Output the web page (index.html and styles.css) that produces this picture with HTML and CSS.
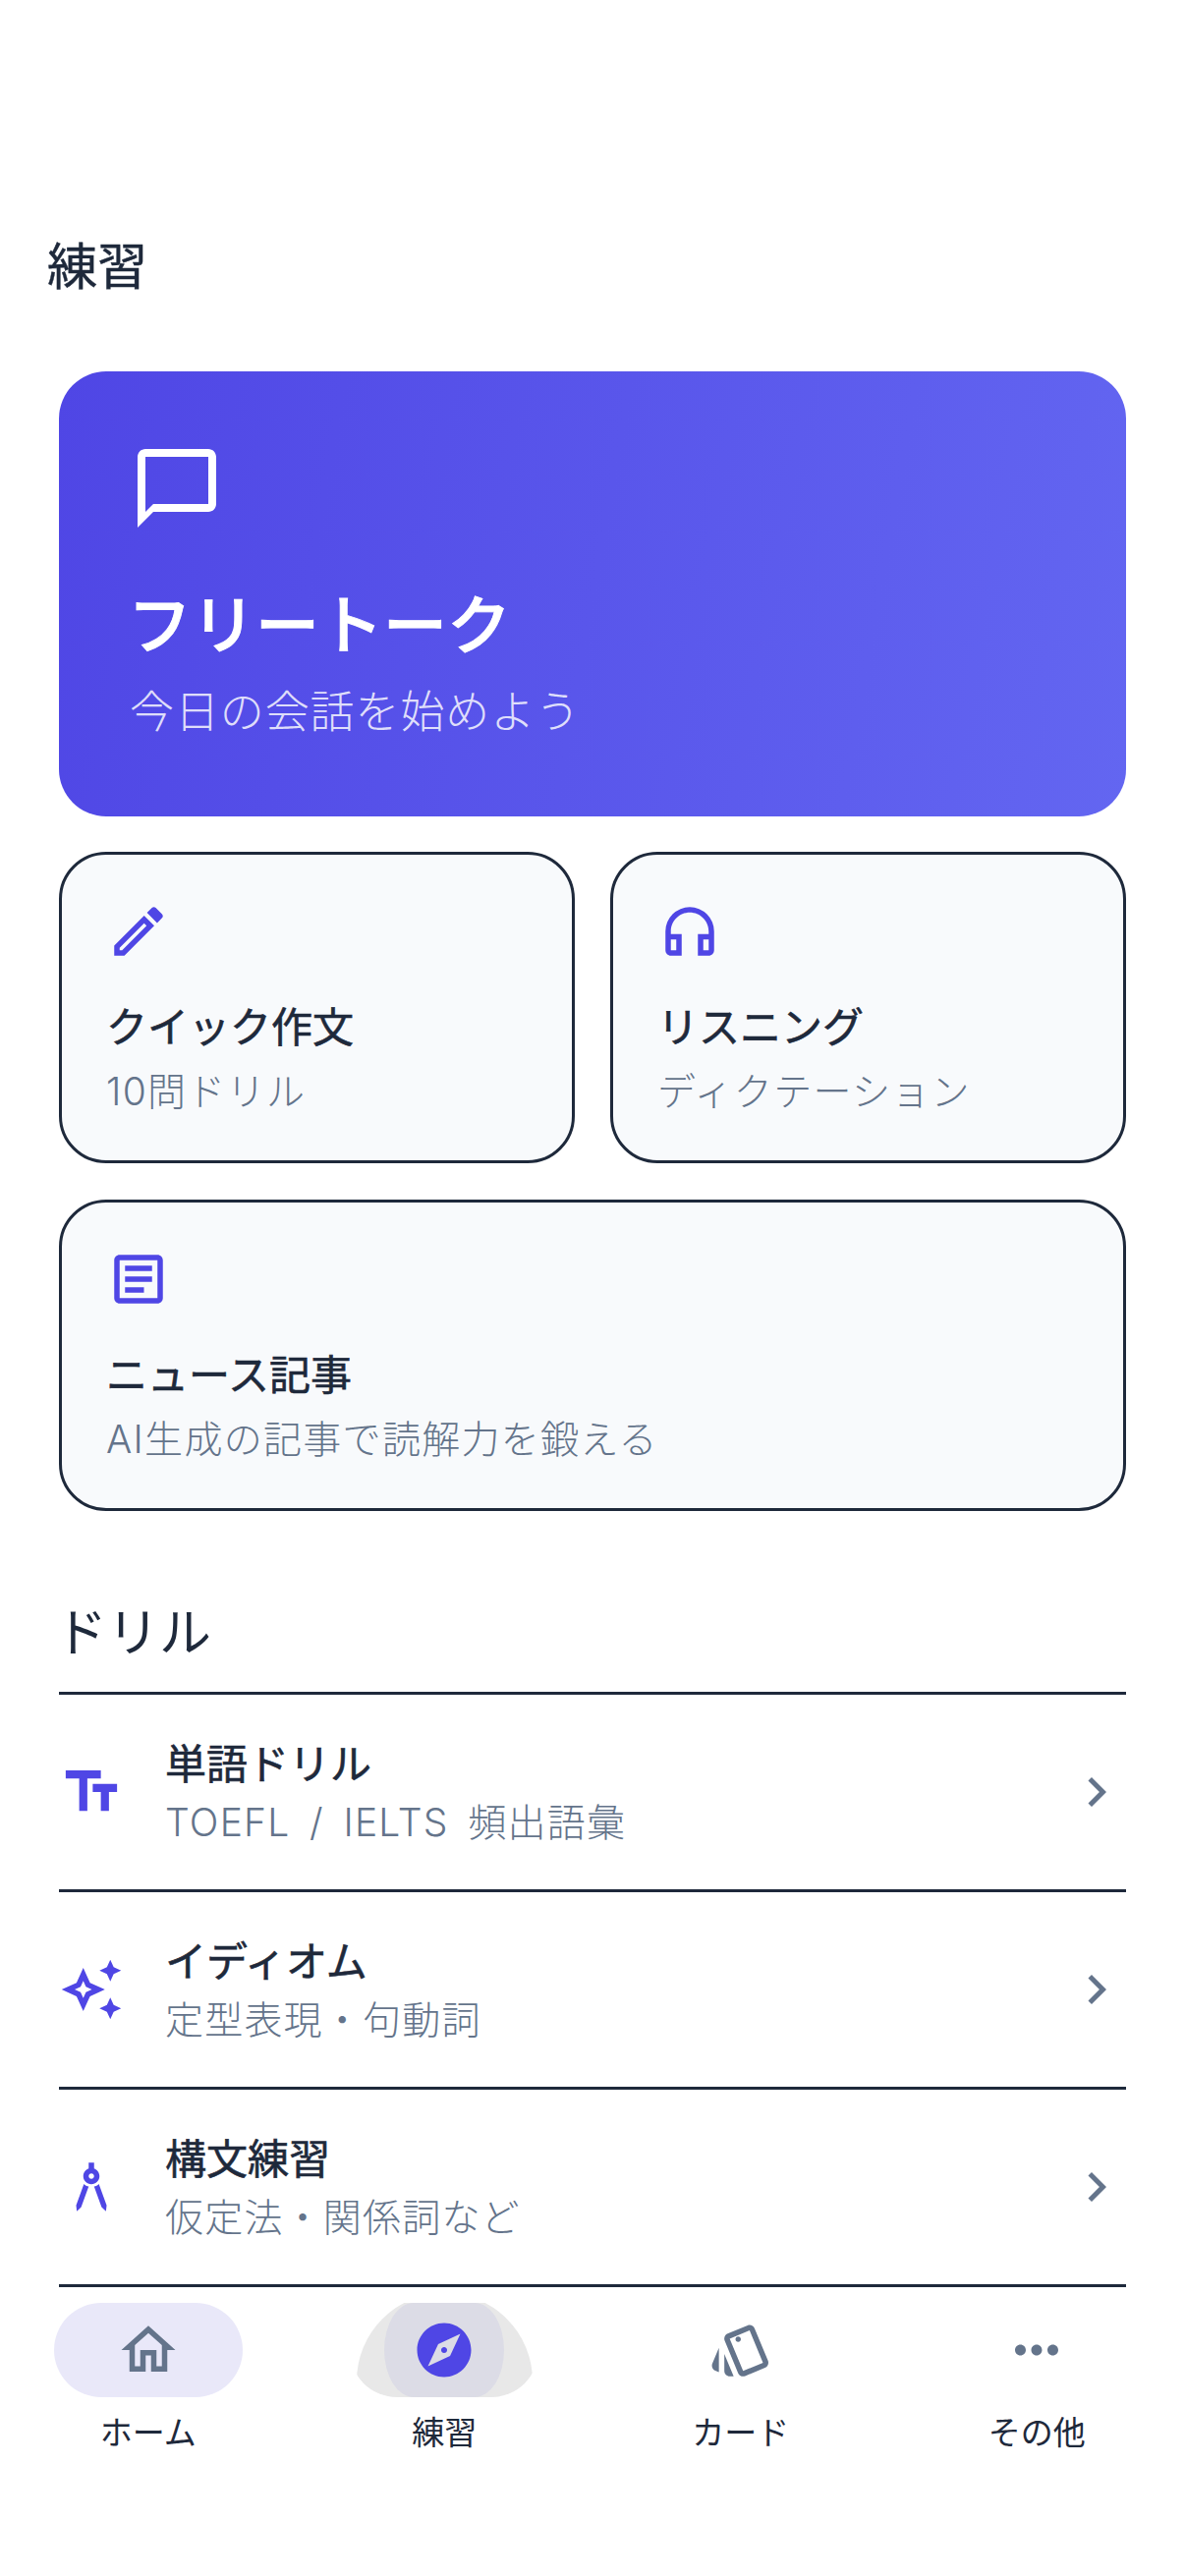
FILE: index.html
```html
<!DOCTYPE html>
<html lang="ja">
<head>
<meta charset="utf-8">
<title>練習</title>
<link rel="stylesheet" href="styles.css">
</head>
<body>
<div class="app">
  <header class="topbar"><h1 class="page-title">練習</h1></header>
  <main class="content">
    <section class="hero">
      <svg class="hero-icon" viewBox="0 0 24 24"><path d="M20 2H4c-1.1 0-2 .9-2 2v18l4-4h14c1.1 0 2-.9 2-2V4c0-1.1-.9-2-2-2zm0 14H6l-2 2V4h16v12z"/></svg>
      <h2 class="hero-title">フリートーク</h2>
      <p class="hero-sub">今日の会話を始めよう</p>
    </section>
    <div class="card-grid">
      <section class="card">
        <svg class="card-icon" viewBox="0 0 24 24"><path d="M14.06 9.02l.92.92L5.92 19H5v-.92l9.06-9.06M17.66 3c-.25 0-.51.1-.7.29l-1.83 1.83 3.75 3.75 1.83-1.83c.39-.39.39-1.02 0-1.41l-2.34-2.34c-.2-.2-.45-.29-.71-.29zm-3.6 3.19L3 17.25V21h3.75L17.81 9.94l-3.75-3.75z"/></svg>
        <h3 class="card-title">クイック作文</h3>
        <p class="card-sub">10問ドリル</p>
      </section>
      <section class="card">
        <svg class="card-icon" viewBox="0 0 24 24"><path d="M12 3a9 9 0 0 0-9 9v7c0 1.1.9 2 2 2h4v-8H5v-1c0-3.87 3.13-7 7-7s7 3.13 7 7v1h-4v8h4c1.1 0 2-.9 2-2v-7a9 9 0 0 0-9-9zM7 15v4H5v-4h2zm12 4h-2v-4h2v4z"/></svg>
        <h3 class="card-title">リスニング</h3>
        <p class="card-sub">ディクテーション</p>
      </section>
      <section class="card card-wide">
        <svg class="card-icon" viewBox="0 0 24 24"><path d="M19 5v14H5V5h14m0-2H5c-1.1 0-2 .9-2 2v14c0 1.1.9 2 2 2h14c1.1 0 2-.9 2-2V5c0-1.1-.9-2-2-2zM14 17H7v-2h7v2zm3-4H7v-2h10v2zm0-4H7V7h10v2z"/></svg>
        <h3 class="card-title">ニュース記事</h3>
        <p class="card-sub">AI生成の記事で読解力を鍛える</p>
      </section>
    </div>
    <h2 class="section-title">ドリル</h2>
    <ul class="drill-list">
      <li class="drill-row">
        <svg class="row-icon" viewBox="0 0 24 24"><path d="M2.5 4v3h5v12h3V7h5V4h-13zm19 5h-9v3h3v7h3v-7h3V9z"/></svg>
        <div class="row-text"><div class="row-title">単語ドリル</div><div class="row-sub">TOEFL / IELTS 頻出語彙</div></div>
        <svg class="chevron" viewBox="0 0 24 24"><path d="M10 6L8.59 7.41 13.17 12l-4.58 4.59L10 18l6-6z"/></svg>
      </li>
      <li class="drill-row">
        <svg class="row-icon" viewBox="0 0 24 24"><path d="M19 9l1.25-2.75L23 5l-2.75-1.25L19 1l-1.25 2.75L15 5l2.75 1.25L19 9zm0 6l-1.25 2.75L15 19l2.75 1.25L19 23l1.25-2.75L23 19l-2.75-1.25L19 15zm-7.5-5.5L9 4 6.5 9.5 1 12l5.5 2.5L9 20l2.5-5.5L17 12l-5.5-2.5zM9.99 12.99L9 15.17l-.99-2.18L5.83 12l2.18-.99L9 8.83l.99 2.18 2.18.99-2.18.99z"/></svg>
        <div class="row-text"><div class="row-title">イディオム</div><div class="row-sub">定型表現・句動詞</div></div>
        <svg class="chevron" viewBox="0 0 24 24"><path d="M10 6L8.59 7.41 13.17 12l-4.58 4.59L10 18l6-6z"/></svg>
      </li>
      <li class="drill-row">
        <svg class="row-icon" viewBox="0 0 24 24"><path d="M6.36 18.78L6.61 21l1.62-1.54 2.77-7.6c-.68-.17-1.28-.51-1.77-.98l-2.87 7.9zM14.77 10.88c-.49.47-1.1.81-1.77.98l2.77 7.6L17.39 21l.26-2.22-2.88-7.9zM15 8c0-1.3-.84-2.4-2-2.82V3h-2v2.18C9.84 5.6 9 6.7 9 8c0 1.66 1.34 3 3 3s3-1.34 3-3zm-3 1c-.55 0-1-.45-1-1s.45-1 1-1 1 .45 1 1-.45 1-1 1z"/></svg>
        <div class="row-text"><div class="row-title">構文練習</div><div class="row-sub">仮定法・関係詞など</div></div>
        <svg class="chevron" viewBox="0 0 24 24"><path d="M10 6L8.59 7.41 13.17 12l-4.58 4.59L10 18l6-6z"/></svg>
      </li>
    </ul>
  </main>
  <nav class="bottom-nav">
    <div class="nav-item">
      <div class="nav-pill nav-pill-on">
        <svg class="nav-icon" viewBox="0 0 24 24"><path d="M12 5.69l5 4.5V18h-2v-6H9v6H7v-7.81l5-4.5M12 3L2 12h3v8h6v-6h2v6h6v-8h3L12 3z"/></svg>
      </div>
      <span class="nav-label">ホーム</span>
    </div>
    <div class="nav-item">
      <div class="nav-pill">
        <span class="ripple"></span>
        <span class="pill-grow"></span>
        <svg class="nav-icon nav-icon-active" viewBox="0 0 24 24"><path fill-rule="evenodd" d="M12 10.9c-.61 0-1.1.49-1.1 1.1s.49 1.1 1.1 1.1c.61 0 1.1-.49 1.1-1.1s-.49-1.1-1.1-1.1zM12 2C6.48 2 2 6.48 2 12s4.48 10 10 10 10-4.48 10-10S17.52 2 12 2zm2.19 12.19L6 18l3.81-8.19L18 6l-3.81 8.19z"/></svg>
      </div>
      <span class="nav-label">練習</span>
    </div>
    <div class="nav-item">
      <div class="nav-pill">
        <svg class="nav-icon" viewBox="0 0 24 24"><path d="M2.53 19.65l1.34.56v-9.03l-2.43 5.86c-.41 1.02.08 2.19 1.09 2.61zm19.5-3.7L17.07 3.98c-.31-.75-1.04-1.21-1.81-1.23-.26 0-.53.04-.79.15L7.1 5.95c-.75.31-1.21 1.03-1.23 1.8-.01.27.04.54.15.8l4.96 11.97c.31.76 1.05 1.22 1.83 1.23.26 0 .52-.05.77-.15l7.36-3.05c1.02-.42 1.51-1.59 1.09-2.6zm-9.2 3.8L7.87 7.79l7.35-3.04h.01l4.95 11.95-7.35 3.05zM11 9c.55 0 1-.45 1-1s-.45-1-1-1-1 .45-1 1 .45 1 1 1zM5.88 19.75c0 1.1.9 2 2 2h1.45l-3.45-8.34v6.34z"/></svg>
      </div>
      <span class="nav-label">カード</span>
    </div>
    <div class="nav-item">
      <div class="nav-pill">
        <svg class="nav-icon" viewBox="0 0 24 24"><path d="M6 10c-1.1 0-2 .9-2 2s.9 2 2 2 2-.9 2-2-.9-2-2-2zm12 0c-1.1 0-2 .9-2 2s.9 2 2 2 2-.9 2-2-.9-2-2-2zm-6 0c-1.1 0-2 .9-2 2s.9 2 2 2 2-.9 2-2-.9-2-2-2z"/></svg>
      </div>
      <span class="nav-label">その他</span>
    </div>
  </nav>
</div>
</body>
</html>
```
FILE: styles.css
```css
* { box-sizing: border-box; }
html, body { margin: 0; padding: 0; background: #fff; }
body {
  font-family: "Noto Sans CJK JP", "Noto Sans", sans-serif;
  color: #1e293b;
  width: 1206px;
  height: 2622px;
  overflow: hidden;
}
h1, h2, h3, p, ul { margin: 0; padding: 0; }
svg { display: block; flex: none; }

.topbar { padding: 237px 48px 0; }
.page-title { font-size: 51px; line-height: 62px; font-weight: 400; -webkit-text-stroke: .4px #1e293b; }

.content { padding: 79px 60px 0; }

.hero {
  height: 453px;
  padding: 71px 72px 0;
  border-radius: 48px;
  background: linear-gradient(100deg, #4f46e5 0%, #6366f1 100%);
  color: #fff;
}
.hero-icon { width: 96px; height: 96px; fill: #fff; }
.hero-title { margin: 45px 0 0 -2px; font-size: 65px; line-height: 84px; font-weight: 500; -webkit-text-stroke: .9px #fff; }
.hero-sub { margin-top: 18px; font-size: 45px; line-height: 60px; font-weight: 300; letter-spacing: .9px; color: rgba(255, 255, 255, .82); }

.card-grid {
  margin-top: 36px;
  display: grid;
  grid-template-columns: 1fr 1fr;
  column-gap: 36px;
  row-gap: 37px;
}
.card {
  height: 317px;
  padding: 45px;
  border: 3px solid #1e293b;
  border-radius: 48px;
  background: #f8fafc;
}
.card-wide { grid-column: 1 / 3; }
.card-icon { width: 66px; height: 66px; fill: #4f46e5; }
.card-title { margin-top: 32px; font-size: 42px; line-height: 60px; font-weight: 400; -webkit-text-stroke: .6px #1e293b; }
.card-sub {
  margin-top: 13px;
  font-family: "Inter", "Noto Sans CJK JP", sans-serif;
  font-size: 39px;
  line-height: 50px;
  font-weight: 300;
  letter-spacing: 1.3px;
  color: #64748b;
}

.section-title { margin: 84px 0 0 -4px; font-size: 53px; line-height: 72px; font-weight: 400; }

.drill-list { list-style: none; margin-top: 28px; border-top: 3px solid #1e293b; }
.drill-row {
  height: 201px;
  display: flex;
  align-items: center;
  gap: 42px;
  border-bottom: 3px solid #1e293b;
}
.row-text { flex: 1; margin-bottom: 1px; }
.row-title { font-size: 42px; line-height: 59px; font-weight: 400; -webkit-text-stroke: .6px #1e293b; }
.row-sub {
  margin-top: 3px;
  font-family: "Inter", "Noto Sans CJK JP", sans-serif;
  font-size: 39px;
  line-height: 59px;
  font-weight: 300;
  letter-spacing: 1.2px;
  word-spacing: 7.5px;
  color: #64748b;
}
.row-icon { width: 66px; height: 66px; fill: #4f46e5; }
.chevron { width: 60px; height: 60px; fill: #64748b; }

.bottom-nav { display: grid; grid-template-columns: repeat(4, 1fr); padding-top: 16px; }
.nav-item { display: flex; flex-direction: column; align-items: center; }
.nav-pill {
  position: relative;
  width: 192px;
  height: 96px;
  border-radius: 48px;
  overflow: hidden;
  display: flex;
  align-items: center;
  justify-content: center;
}
.nav-pill-on { background: #e9e8f9; }
.ripple {
  position: absolute;
  left: 7px;
  top: -10px;
  width: 179px;
  height: 179px;
  border-radius: 50%;
  background: #e8e8e8;
}
.pill-grow {
  position: absolute;
  left: 35px;
  right: 35px;
  top: 0;
  bottom: 0;
  border-radius: 30px / 48px;
  background: #dcdce6;
}
.nav-icon { position: relative; width: 66px; height: 66px; fill: #64748b; }
.nav-icon-active { fill: #4f46e5; }
.nav-label { margin-top: 11px; font-size: 33px; line-height: 46px; color: #1e293b; }
```
